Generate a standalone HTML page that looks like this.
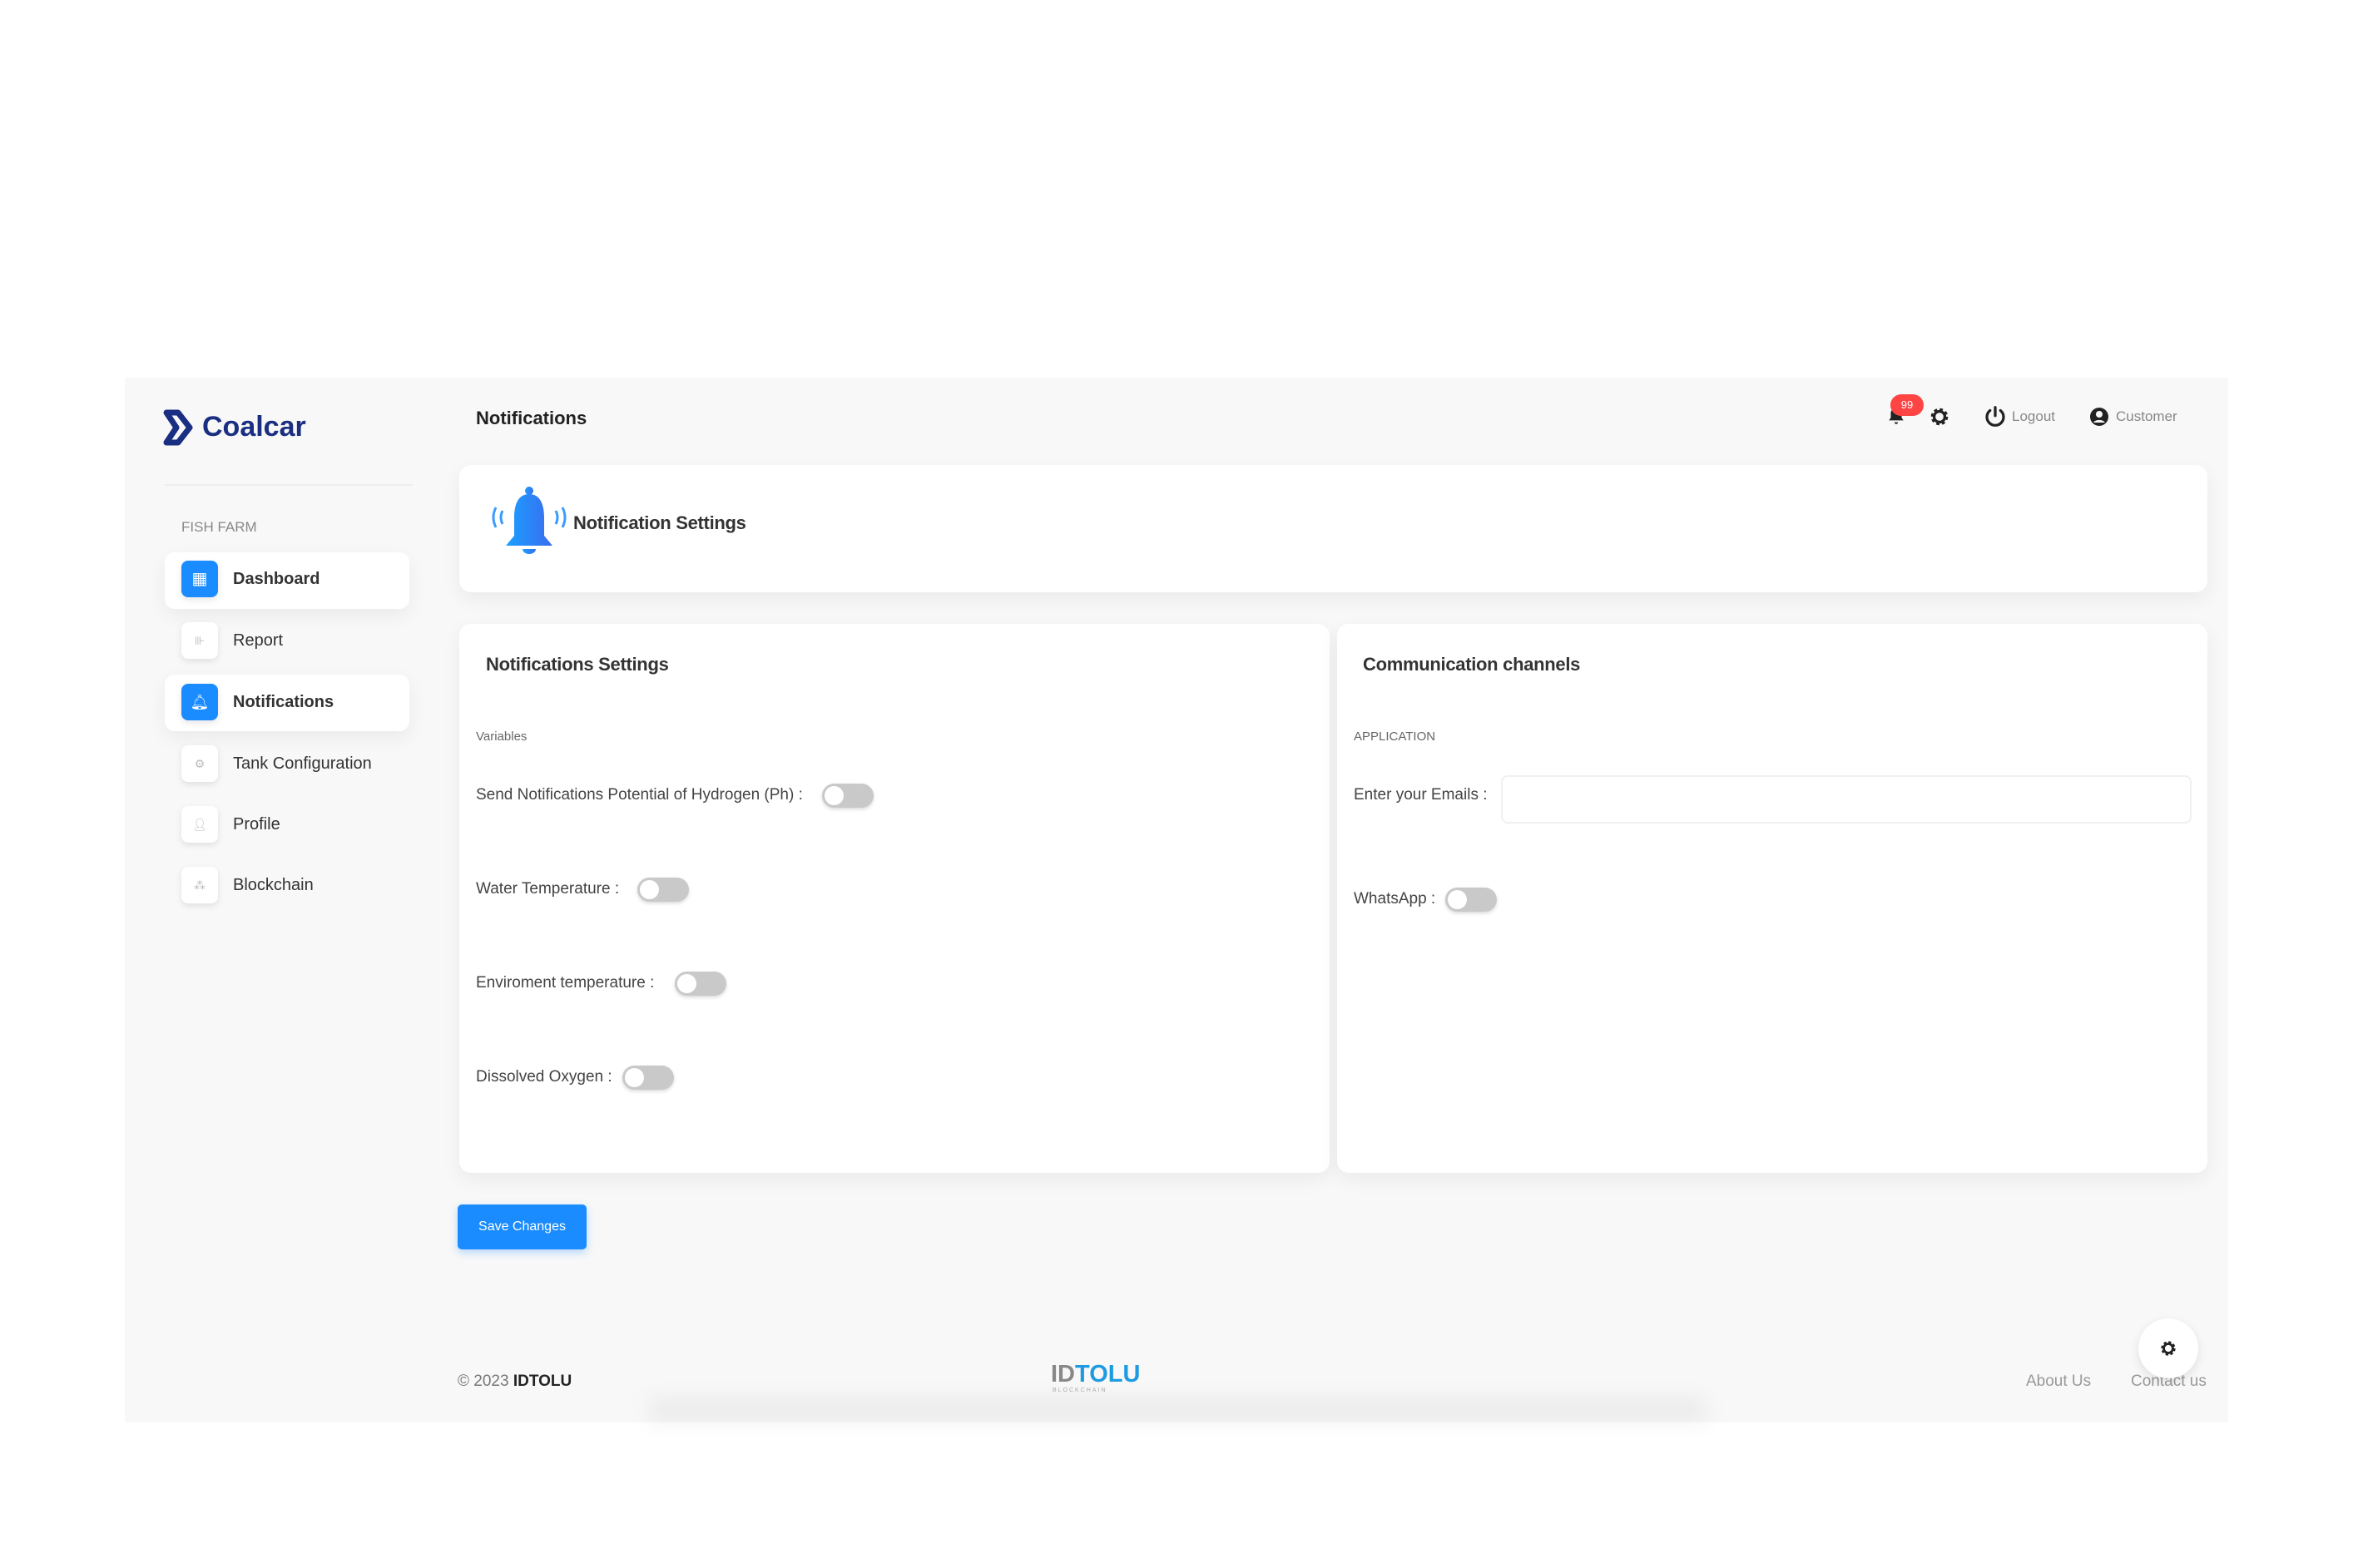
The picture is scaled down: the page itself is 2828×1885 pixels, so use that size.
<!DOCTYPE html>
<html><head><meta charset="utf-8"><style>
*{margin:0;padding:0;box-sizing:border-box}
body{width:2828px;height:1885px;background:#fff;font-family:"Liberation Sans",sans-serif;position:relative;overflow:hidden;color:#333}
.a{position:absolute}
.app{left:150px;top:454px;width:2528px;height:1256px;background:#f8f8f8}
.card{background:#fff;border-radius:14px;box-shadow:0 8px 24px rgba(0,0,0,.06)}
.t{font-size:19px;color:#444;white-space:nowrap}
.tg{width:62px;height:29px;border-radius:15px;background:#c9c9c9;box-shadow:0 2px 4px rgba(0,0,0,.15)}
.tg::after{content:"";position:absolute;left:3px;top:3px;width:23px;height:23px;border-radius:50%;background:#fff}
.mi{left:198px;width:294px;height:68px;border-radius:12px}
.ic{width:44px;height:44px;border-radius:8px;background:#fff;box-shadow:0 3px 8px rgba(0,0,0,.1);font-size:14px;color:#bbb;text-align:center;line-height:44px}
.ml{font-size:20px;color:#333;white-space:nowrap}
</style></head><body>
<div class="a app"></div>
<!-- logo -->
<svg class="a" style="left:196px;top:492px" width="40" height="44" viewBox="0 0 40 44"><path d="M4 4h14l14 18-14 18H4l12-18z" fill="none" stroke="#1a2e82" stroke-width="7" stroke-linejoin="round"/></svg>
<div class="a" style="left:243px;top:494px;font-size:34px;font-weight:bold;color:#1a2e82">Coalcar</div>
<div class="a" style="left:198px;top:582px;width:298px;height:2px;background:#eee"></div>
<div class="a" style="left:218px;top:624px;font-size:17px;color:#888">FISH FARM</div>
<div class="a mi card" style="top:664px"></div>
<div class="a ic" style="left:218px;top:674px;background:#1a8cff;color:#fff;font-size:20px">▦</div>
<div class="a ml" style="left:280px;top:685px;font-weight:bold">Dashboard</div>
<div class="a ic" style="left:218px;top:748px">⊪</div>
<div class="a ml" style="left:280px;top:759px">Report</div>
<div class="a mi card" style="top:811px"></div>
<div class="a ic" style="left:218px;top:822px;background:#1a8cff;color:#fff;font-size:18px">🔔︎</div>
<div class="a ml" style="left:280px;top:833px;font-weight:bold">Notifications</div>
<div class="a ic" style="left:218px;top:896px">⚙︎</div>
<div class="a ml" style="left:280px;top:907px">Tank Configuration</div>
<div class="a ic" style="left:218px;top:969px">👤︎</div>
<div class="a ml" style="left:280px;top:980px">Profile</div>
<div class="a ic" style="left:218px;top:1042px">⁂</div>
<div class="a ml" style="left:280px;top:1053px">Blockchain</div>
<!-- header -->
<div class="a" style="left:572px;top:490px;font-size:22px;font-weight:bold;color:#222">Notifications</div>
<svg class="a" style="left:2266px;top:482px" width="26" height="36" viewBox="0 0 24 24"><path d="M12 3a6 6 0 0 0-6 6v5l-2 3h16l-2-3V9a6 6 0 0 0-6-6zm-2 16a2 2 0 0 0 4 0z" fill="#222"/></svg>
<div class="a" style="left:2272px;top:474px;width:40px;height:26px;border-radius:13px;background:#f44;color:#fff;font-size:13px;text-align:center;line-height:26px">99</div>
<svg class="a" style="left:2318px;top:488px" width="26" height="26" viewBox="0 0 24 24"><circle cx="12" cy="12" r="7" fill="none" stroke="#222" stroke-width="5" stroke-dasharray="3 2.5"/><circle cx="12" cy="12" r="6" fill="none" stroke="#222" stroke-width="3"/></svg>
<svg class="a" style="left:2383px;top:486px" width="30" height="30" viewBox="0 0 24 24"><path d="M7 6a8 8 0 1 0 10 0" fill="none" stroke="#222" stroke-width="2.6" stroke-linecap="round"/><path d="M12 3v8" stroke="#222" stroke-width="2.6" stroke-linecap="round"/></svg>
<div class="a" style="left:2418px;top:491px;font-size:17px;color:#888">Logout</div>
<svg class="a" style="left:2511px;top:489px" width="24" height="24" viewBox="0 0 24 24"><circle cx="12" cy="12" r="11" fill="#222"/><circle cx="12" cy="9" r="4" fill="#f8f8f8"/><path d="M5 19a8 6 0 0 1 14 0" fill="#f8f8f8"/></svg>
<div class="a" style="left:2543px;top:491px;font-size:17px;color:#888">Customer</div>
<!-- top card -->
<div class="a card" style="left:552px;top:559px;width:2101px;height:153px"></div>
<svg class="a" style="left:586px;top:580px" width="100" height="100" viewBox="0 0 100 100"><defs><linearGradient id="g" x1="0" x2="1"><stop offset="0" stop-color="#1ba0ff"/><stop offset="1" stop-color="#3a6cf0"/></linearGradient></defs><path d="M10 30q-6 12 0 24M18 34q-4 8 0 16M90 30q6 12 0 24M82 34q4 8 0 16" fill="none" stroke="#3b9cff" stroke-width="3"/><circle cx="50" cy="10" r="5" fill="url(#g)"/><path d="M50 14c-14 0-18 14-18 28v22l-10 12h56l-10-12V42c0-14-4-28-18-28z" fill="url(#g)"/><path d="M42 80a8 6 0 0 0 16 0z" fill="url(#g)"/></svg>
<div class="a" style="left:689px;top:616px;font-size:22px;font-weight:bold;color:#333;letter-spacing:-0.3px">Notification Settings</div>
<!-- left card -->
<div class="a card" style="left:552px;top:750px;width:1046px;height:660px"></div>
<div class="a" style="left:584px;top:786px;font-size:22px;color:#333;font-weight:bold;letter-spacing:-0.3px">Notifications Settings</div>
<div class="a" style="left:572px;top:877px;font-size:15px;color:#666">Variables</div>
<div class="a t" style="left:572px;top:945px">Send Notifications Potential of Hydrogen (Ph) :</div>
<div class="a tg" style="left:988px;top:942px"></div>
<div class="a t" style="left:572px;top:1058px">Water Temperature :</div>
<div class="a tg" style="left:766px;top:1055px"></div>
<div class="a t" style="left:572px;top:1171px">Enviroment temperature :</div>
<div class="a tg" style="left:811px;top:1168px"></div>
<div class="a t" style="left:572px;top:1284px">Dissolved Oxygen :</div>
<div class="a tg" style="left:748px;top:1281px"></div>
<!-- right card -->
<div class="a card" style="left:1607px;top:750px;width:1046px;height:660px"></div>
<div class="a" style="left:1638px;top:786px;font-size:22px;color:#333;font-weight:bold;letter-spacing:-0.3px">Communication channels</div>
<div class="a" style="left:1627px;top:877px;font-size:15px;color:#666">APPLICATION</div>
<div class="a t" style="left:1627px;top:945px">Enter your Emails :</div>
<div class="a" style="left:1804px;top:932px;width:830px;height:58px;border:2px solid #f0f0f0;border-radius:8px"></div>
<div class="a t" style="left:1627px;top:1070px">WhatsApp :</div>
<div class="a tg" style="left:1737px;top:1067px"></div>
<!-- save -->
<div class="a" style="left:550px;top:1448px;width:155px;height:54px;background:#1a8cff;border-radius:5px;color:#fff;font-size:16px;text-align:center;line-height:54px;box-shadow:0 4px 10px rgba(26,140,255,.3)">Save Changes</div>
<!-- footer -->
<div class="a" style="left:780px;top:1680px;width:1270px;height:30px;background:rgba(0,0,0,.05);filter:blur(12px)"></div>
<div class="a" style="left:550px;top:1650px;font-size:19px;color:#777">© 2023 <b style="color:#222">IDTOLU</b></div>
<div class="a" style="left:1263px;top:1636px;font-size:29px;font-weight:bold;color:#1e9be0"><span style="color:#888">ID</span>TOLU</div>
<div class="a" style="left:1265px;top:1668px;font-size:7px;color:#aaa;letter-spacing:2px">BLOCKCHAIN</div>
<div class="a" style="left:2435px;top:1650px;font-size:19px;color:#999">About Us</div>
<div class="a" style="left:2561px;top:1650px;font-size:19px;color:#999">Contact us</div>
<div class="a" style="left:2570px;top:1585px;width:72px;height:72px;border-radius:50%;background:#fff;box-shadow:0 4px 12px rgba(0,0,0,.1)"></div>
<svg class="a" style="left:2595px;top:1610px" width="22" height="22" viewBox="0 0 24 24"><circle cx="12" cy="12" r="7" fill="none" stroke="#222" stroke-width="5" stroke-dasharray="3 2.5"/><circle cx="12" cy="12" r="6" fill="none" stroke="#222" stroke-width="3"/></svg>
</body></html>
